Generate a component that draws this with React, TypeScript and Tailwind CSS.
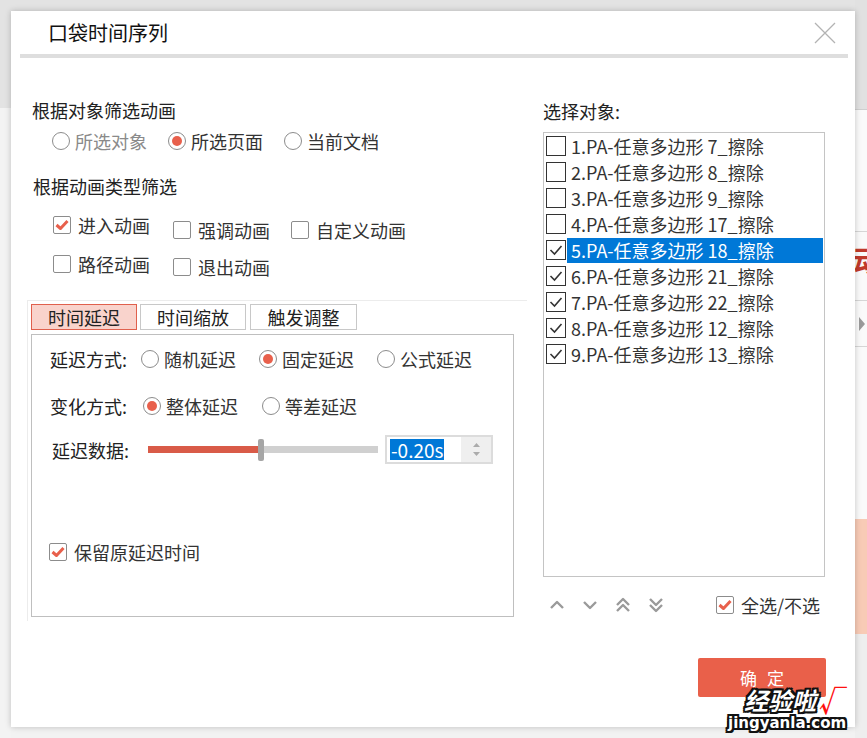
const items = [
  { label: '1.PA-任意多边形 7_擦除', on: false },
  { label: '2.PA-任意多边形 8_擦除', on: false },
  { label: '3.PA-任意多边形 9_擦除', on: false },
  { label: '4.PA-任意多边形 17_擦除', on: false },
  { label: '5.PA-任意多边形 18_擦除', on: true, selected: true },
  { label: '6.PA-任意多边形 21_擦除', on: true },
  { label: '7.PA-任意多边形 22_擦除', on: true },
  { label: '8.PA-任意多边形 12_擦除', on: true },
  { label: '9.PA-任意多边形 13_擦除', on: true },
];

const outline =
  '[text-shadow:2px_0_0_#111,-2px_0_0_#111,0_2px_0_#111,0_-2px_0_#111,2px_2px_0_#111,-2px_-2px_0_#111,2px_-2px_0_#111,-2px_2px_0_#111]';

function Radio({ checked, label, disabled }: { checked?: boolean; label: string; disabled?: boolean }) {
  return (
    <div className="flex items-center gap-[5px] h-[24px]">
      <span className="w-[18px] h-[18px] rounded-full border border-[#8c8c8c] bg-white flex items-center justify-center shrink-0">
        {checked && <span className="w-[10px] h-[10px] rounded-full bg-[#e8604c]" />}
      </span>
      <span className={disabled ? 'text-[#8a8a8a]' : 'text-[#333]'}>{label}</span>
    </div>
  );
}

function CheckBox({ checked, label }: { checked?: boolean; label: string }) {
  return (
    <div className="flex items-center gap-[7px] h-[24px]">
      <span className="w-[18px] h-[18px] rounded-[2px] border border-[#8c8c8c] bg-white flex items-center justify-center shrink-0">
        {checked && (
          <svg width="14" height="12" viewBox="0 0 14 12">
            <path d="M1.5 6 L5.5 9.5 L12.5 2" fill="none" stroke="#e8604c" strokeWidth="3" strokeLinejoin="round" />
          </svg>
        )}
      </span>
      <span className="text-[#333]">{label}</span>
    </div>
  );
}

function Arrow({ d }: { d: string }) {
  return (
    <svg width="18" height="18" viewBox="0 0 18 18">
      <path d={d} fill="none" stroke="#9a9a9a" strokeWidth="2.4" strokeLinejoin="round" />
    </svg>
  );
}

export default function App() {
  return (
    <div className="w-[867px] h-[738px] relative overflow-hidden bg-[#eeeeee] font-['Microsoft_YaHei','Noto_Sans_CJK_SC',sans-serif] text-[18px] leading-[24px]">
      <div className="flex h-full">
        {/* left background strip */}
        <div className="w-[11px] flex flex-col">
          <div className="h-[108px] bg-[#e3e3e3]" />
          <div className="flex-1 bg-[#f3f3f3]" />
        </div>

        {/* dialog column */}
        <div className="w-[844px] flex flex-col">
          <div className="h-[11px] bg-[#e3e3e3]" />
          <div className="h-[716px] bg-white shadow-[0_0_6px_rgba(0,0,0,0.22)] flex flex-col relative z-10">
            <div className="h-[43px] flex items-center justify-between pl-[37px] pr-[19px]">
              <span className="text-[20px] text-[#111] leading-[26px] mt-[1px]">口袋时间序列</span>
              <svg width="22" height="22" viewBox="0 0 22 22">
                <path d="M1 1 L21 21 M21 1 L1 21" stroke="#b3b3b3" strokeWidth="1.3" />
              </svg>
            </div>
            <div className="h-[4px] bg-[#dedede] ml-[9px] mr-[7px]" />

            <div className="flex flex-1">
              {/* left column */}
              <div className="w-[500px] ml-[16px] flex flex-col">
                <div className="mt-[40px] ml-[5px] text-[#222]">根据对象筛选动画</div>
                <div className="mt-[7px] ml-[25px] flex">
                  <div className="w-[116px]"><Radio label="所选对象" disabled /></div>
                  <div className="w-[116px]"><Radio label="所选页面" checked /></div>
                  <Radio label="当前文档" />
                </div>
                <div className="mt-[21px] ml-[6px] text-[#222]">根据动画类型筛选</div>
                <div className="mt-[15px] ml-[26px] flex items-start">
                  <div className="w-[120px]"><CheckBox label="进入动画" checked /></div>
                  <div className="w-[118px] mt-[5px]"><CheckBox label="强调动画" /></div>
                  <div className="mt-[5px]"><CheckBox label="自定义动画" /></div>
                </div>
                <div className="mt-[10px] ml-[26px] flex items-start">
                  <div className="w-[120px]"><CheckBox label="路径动画" /></div>
                  <div className="mt-[3px]"><CheckBox label="退出动画" /></div>
                </div>

                <div className="mt-[21px] border-t border-l border-[#ececec] pl-[3px] pt-[3px] pb-[4px]">
                  <div className="flex gap-[3px] h-[26px] text-[#222]">
                    <div className="w-[106px] bg-[#f9d3cc] border border-[#e0604d] flex items-center justify-center">时间延迟</div>
                    <div className="w-[106px] border border-[#c8c8c8] flex items-center justify-center">时间缩放</div>
                    <div className="w-[107px] ml-[1px] border border-[#c8c8c8] flex items-center justify-center">触发调整</div>
                  </div>
                  <div className="mt-[4px] w-[483px] h-[283px] border border-[#bfbfbf] flex flex-col pl-[18px]">
                    <div className="mt-[12px] flex">
                      <div className="w-[91px] text-[#222]">延迟方式:</div>
                      <div className="w-[118px]"><Radio label="随机延迟" /></div>
                      <div className="w-[118px]"><Radio label="固定延迟" checked /></div>
                      <Radio label="公式延迟" />
                    </div>
                    <div className="mt-[23px] flex">
                      <div className="w-[93px] text-[#222]">变化方式:</div>
                      <div className="w-[119px]"><Radio label="整体延迟" checked /></div>
                      <Radio label="等差延迟" />
                    </div>
                    <div className="mt-[17px] flex items-center">
                      <div className="w-[96px] ml-[2px] text-[#222]">延迟数据:</div>
                      <div className="w-[230px] flex items-center">
                        <div className="w-[110px] h-[7px] bg-[#d95b48]" />
                        <div className="w-[6px] h-[22px] rounded-[2px] bg-[#a6a6a6]" />
                        <div className="flex-1 h-[7px] bg-[#d0d0d0]" />
                      </div>
                      <div className="ml-[7px] w-[108px] h-[29px] border-2 border-[#dcdcdc] flex items-stretch">
                        <div className="flex-1 flex items-center pl-[3px]">
                          <span className="bg-[#0078d7] text-white text-[19px] leading-[21px] px-[1px]">-0.20s</span>
                        </div>
                        <div className="w-[30px] bg-[#efefef] flex flex-col items-center justify-center gap-[5px]">
                          <svg width="7" height="4" viewBox="0 0 7 4"><path d="M0 4 L3.5 0 L7 4Z" fill="#ababab" /></svg>
                          <svg width="7" height="4" viewBox="0 0 7 4"><path d="M0 0 L3.5 4 L7 0Z" fill="#ababab" /></svg>
                        </div>
                      </div>
                    </div>
                    <div className="mt-[76px] -ml-[1px]"><CheckBox label="保留原延迟时间" checked /></div>
                  </div>
                </div>
              </div>

              {/* right column */}
              <div className="w-[282px] ml-[16px] flex flex-col">
                <div className="mt-[41px] text-[#222]">选择对象:</div>
                <div className="mt-[9px] h-[445px] border border-[#c4c4c4] flex flex-col">
                  {items.map(it => (
                    <div key={it.label} className="h-[26px] flex items-center pl-[2px]">
                      <span className="w-[20px] h-[20px] border-[1.5px] border-[#333] bg-white flex items-center justify-center shrink-0">
                        {it.on && (
                          <svg width="14" height="12" viewBox="0 0 14 12">
                            <path d="M1.5 6 L5.5 10 L12.5 2" fill="none" stroke="#333" strokeWidth="1.6" />
                          </svg>
                        )}
                      </span>
                      <span className={'ml-[1px] flex-1 mr-[1px] h-[25px] flex items-center pl-[4px] ' + (it.selected ? 'bg-[#0078d7] text-white' : 'text-[#333]')}>
                        {it.label}
                      </span>
                    </div>
                  ))}
                </div>
                <div className="mt-[16px] flex items-center">
                  <div className="flex items-center gap-[15px] ml-[5px]">
                    <Arrow d="M3 12 L9 6 L15 12" />
                    <Arrow d="M3 6 L9 12 L15 6" />
                    <Arrow d="M3 9 L9 3 L15 9 M3 15 L9 9 L15 15" />
                    <Arrow d="M3 3 L9 9 L15 3 M3 9 L9 15 L15 9" />
                  </div>
                  <div className="ml-auto mr-[5px]"><CheckBox label="全选/不选" checked /></div>
                </div>
                <div className="mt-[41px] ml-[155px] w-[128px] h-[39px] bg-[#e9604a] rounded-[2px] flex items-center justify-center text-white text-[17px] tracking-[10px] pl-[10px]">
                  确定
                </div>
              </div>
            </div>
          </div>
          <div className="flex-1 bg-[#f2f2f2]" />
        </div>

        {/* right background strip */}
        <div className="w-[12px] flex flex-col bg-[#fafafa]">
          <div className="h-[110px] bg-[#e1e1e1] border-b border-[#cfcfcf]" />
          <div className="h-[122px] border-b border-[#d6d6d6]" />
          <div className="h-[69px] border-b border-[#d6d6d6] overflow-hidden pt-[10px]">
            <span className="block text-[30px] leading-[34px] text-[#c0392b] -ml-[2px] font-bold">动</span>
          </div>
          <div className="h-[46px] border-b border-[#d6d6d6] flex items-center">
            <svg width="10" height="16" viewBox="0 0 10 16"><path d="M4 1 L10 8 L4 15Z" fill="#9a9a9a" /></svg>
          </div>
          <div className="h-[172px]" />
          <div className="h-[115px] bg-[#f8cbb6]" />
          <div className="flex-1 bg-[#eeeeee]" />
        </div>
      </div>

      {/* watermark */}
      <div className="absolute left-[744px] top-[686px] z-20 flex items-end text-white font-bold italic">
        <span className={'text-[24px] leading-[28px] ' + outline}>经验啦</span>
        <span className="text-[#ff1010] text-[28px] leading-[28px] ml-[3px] not-italic">√</span>
      </div>
      <div className={"absolute left-[728px] top-[712px] z-20 text-white font-bold text-[15px] leading-[22px] font-['DejaVu_Sans',sans-serif] " + outline}>
        jingyanla.com
      </div>
    </div>
  );
}
